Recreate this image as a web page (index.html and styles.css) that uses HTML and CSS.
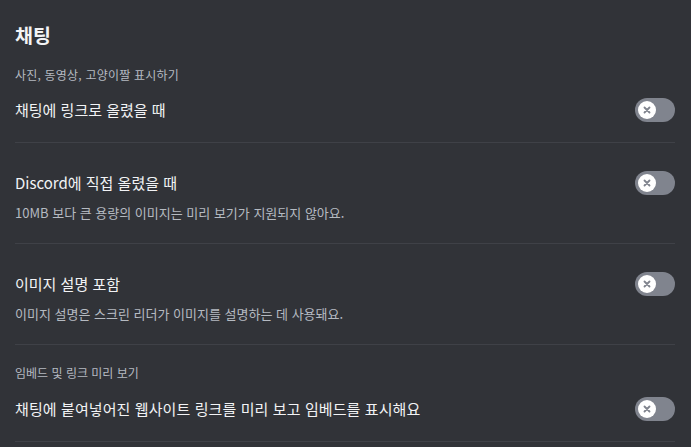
FILE: index.html
```html
<!DOCTYPE html>
<html lang="ko">
<head>
<meta charset="utf-8">
<link rel="stylesheet" href="styles.css">
</head>
<body>
<main class="page">
  <h1 class="title">채팅</h1>

  <h2 class="section-header wide">사진, 동영상, 고양이짤 표시하기</h2>

  <div class="item">
    <div class="row">
      <span class="label">채팅에 링크로 올렸을 때</span>
      <span class="toggle"><span class="knob"><svg viewBox="0 0 12 12" width="10" height="10"><path d="M3 3 L9 9 M9 3 L3 9" stroke="#80848e" stroke-width="2.2" stroke-linecap="round"/></svg></span></span>
    </div>
  </div>

  <div class="item spaced">
    <div class="row">
      <span class="label">Discord에 직접 올렸을 때</span>
      <span class="toggle"><span class="knob"><svg viewBox="0 0 12 12" width="10" height="10"><path d="M3 3 L9 9 M9 3 L3 9" stroke="#80848e" stroke-width="2.2" stroke-linecap="round"/></svg></span></span>
    </div>
    <p class="desc">10MB 보다 큰 용량의 이미지는 미리 보기가 지원되지 않아요.</p>
  </div>

  <div class="item spaced">
    <div class="row">
      <span class="label">이미지 설명 포함</span>
      <span class="toggle"><span class="knob"><svg viewBox="0 0 12 12" width="10" height="10"><path d="M3 3 L9 9 M9 3 L3 9" stroke="#80848e" stroke-width="2.2" stroke-linecap="round"/></svg></span></span>
    </div>
    <p class="desc">이미지 설명은 스크린 리더가 이미지를 설명하는 데 사용돼요.</p>
  </div>

  <h2 class="section-header after-divider">임베드 및 링크 미리 보기</h2>

  <div class="item last">
    <div class="row">
      <span class="label long">채팅에 붙여넣어진 웹사이트 링크를 미리 보고 임베드를 표시해요</span>
      <span class="toggle"><span class="knob"><svg viewBox="0 0 12 12" width="10" height="10"><path d="M3 3 L9 9 M9 3 L3 9" stroke="#80848e" stroke-width="2.2" stroke-linecap="round"/></svg></span></span>
    </div>
  </div>
</main>
</body>
</html>
```

FILE: styles.css
```css
html, body {
  margin: 0;
  padding: 0;
  background: #313338;
  font-family: "Noto Sans CJK KR", "Noto Sans", sans-serif;
}

.page {
  padding: 23px 16px 0 15px;
  display: flex;
  flex-direction: column;
}

.title {
  margin: 0;
  font-size: 19.5px;
  line-height: 24px;
  font-weight: 700;
  color: #f2f3f5;
}

.section-header {
  margin: 20px 0 0 0;
  font-size: 12px;
  line-height: 16px;
  font-weight: 400;
  color: #b5bac1;
}

.section-header.wide {
  letter-spacing: 0.2px;
}

.section-header.after-divider {
  margin-top: 20px;
  letter-spacing: 0;
}

.item {
  margin-top: 15px;
  padding-bottom: 20px;
  border-bottom: 1px solid #3f4147;
}

.item.spaced {
  margin-top: 28px;
}

.item.last {
  margin-top: 16px;
}

.row {
  display: flex;
  align-items: center;
  justify-content: space-between;
  min-height: 24px;
}

.label {
  font-size: 15px;
  line-height: 20px;
  color: #f2f3f5;
}

.label.long {
  letter-spacing: 0.1px;
}

.desc {
  margin: 8px 0 0 0;
  font-size: 13px;
  line-height: 20px;
  color: #b5bac1;
}

.toggle {
  flex: none;
  width: 40px;
  height: 24px;
  border-radius: 12px;
  background: #80848e;
  display: flex;
  align-items: center;
  padding-left: 3px;
  box-sizing: border-box;
}

.knob {
  width: 18px;
  height: 18px;
  border-radius: 50%;
  background: #ffffff;
  display: flex;
  align-items: center;
  justify-content: center;
}
```
